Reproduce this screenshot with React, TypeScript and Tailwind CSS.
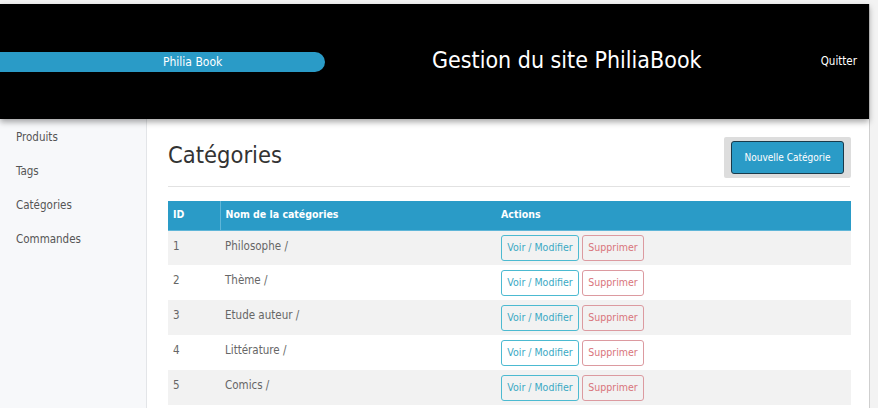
import React from 'react';

const categories = [
  { id: 1, name: 'Philosophe /' },
  { id: 2, name: 'Thème /' },
  { id: 3, name: 'Etude auteur /' },
  { id: 4, name: 'Littérature /' },
  { id: 5, name: 'Comics /' },
];

const menu = ['Produits', 'Tags', 'Catégories', 'Commandes'];

export default function App() {
  return (
    <div className="min-h-screen bg-[#f3f3f3] pt-[4px] font-['DejaVu_Sans_Condensed','DejaVu_Sans',sans-serif] [font-stretch:condensed] overflow-hidden">
      <div className="w-[870px] border-r border-[#cfcfcf]">
        <header className="relative z-10 flex h-[115px] items-center bg-black shadow-[0_3px_6px_rgba(0,0,0,0.35)]">
          <div className="flex h-[20px] w-[325px] items-center rounded-r-full bg-[#2a9bc7] pl-[163px] text-[12px] text-white">
            Philia Book
          </div>
          <h1 className="ml-[107px] pb-[2px] text-[23px] leading-none font-light text-white">Gestion du site PhiliaBook</h1>
          <a className="ml-auto mr-[12px] text-[11.5px] text-white">Quitter</a>
        </header>

        <div className="flex">
          <aside className="w-[147px] shrink-0 border-r border-[#e3e5e8] bg-[#f7f8fa] pt-[2px]">
            <ul>
              {menu.map((item) => (
                <li key={item} className="flex h-[34px] items-center pl-[16px] text-[11.5px] text-[#555]">
                  {item}
                </li>
              ))}
            </ul>
          </aside>

          <main className="h-[290px] flex-1 bg-white pl-[21px] pr-[18px]">
            <div className="flex items-center justify-between pt-[18px]">
              <h2 className="pb-[3px] text-[23.5px] leading-none text-[#333]">Catégories</h2>
              <div className="rounded-[2px] bg-[#dddddd] px-[7px] py-[4px]">
                <button className="h-[33px] w-[113px] rounded-[3px] border border-[#1a3a4a] bg-[#2a9bc7] text-[10px] text-white">
                  Nouvelle Catégorie
                </button>
              </div>
            </div>
            <hr className="mt-[8px] mr-[1px] border-t border-[#e2e2e2]" />

            <table className="mt-[14px] w-[683px] table-fixed border-collapse text-[11.5px]">
              <thead>
                <tr className="h-[29px] border-b border-[#5fb6d8] bg-[#2a9bc7] text-left text-[10.5px] text-white">
                  <th className="w-[52px] pl-[5px] font-bold">ID</th>
                  <th className="w-[277px] border-l border-[#5fb6d8] pl-[5px] font-bold">Nom de la catégories</th>
                  <th className="pl-[4px] font-bold">Actions</th>
                </tr>
              </thead>
              <tbody>
                {categories.map((c, i) => (
                  <tr key={c.id} className={`h-[35px] text-[#666] ${i % 2 === 0 ? 'bg-[#f2f2f2]' : 'bg-white'}`}>
                    <td className="pl-[5px] pb-[3px]">{c.id}</td>
                    <td className="pl-[5px] pb-[3px]">{c.name}</td>
                    <td className="pl-[4px]">
                      <div className="flex gap-[3px]">
                        <button className="h-[26px] w-[78px] rounded-[3px] border border-[#4cbad1] text-[10.5px] text-[#3aa9c4]">
                          Voir / Modifier
                        </button>
                        <button className="h-[26px] w-[62px] rounded-[3px] border border-[#dc9aa0] text-[10.5px] text-[#d9757c]">
                          Supprimer
                        </button>
                      </div>
                    </td>
                  </tr>
                ))}
              </tbody>
            </table>
          </main>
        </div>
      </div>
    </div>
  );
}
